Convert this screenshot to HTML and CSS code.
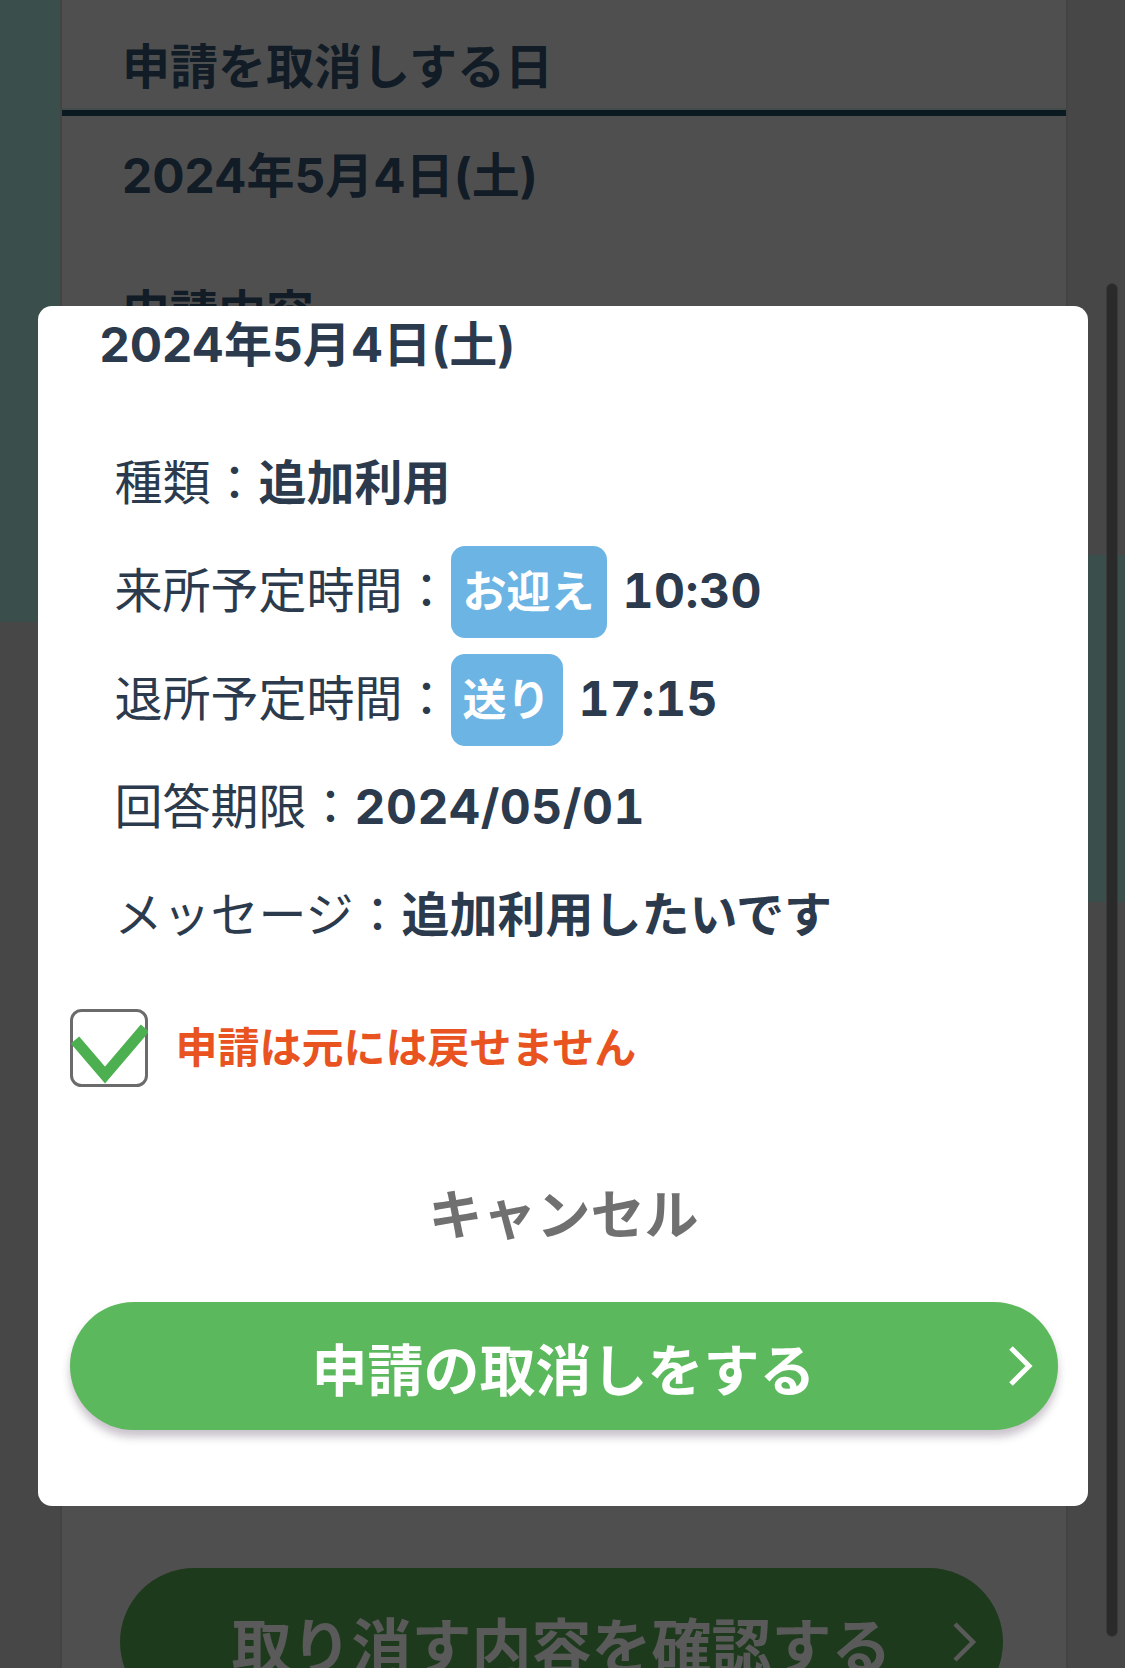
FILE: index.html
```html
<!DOCTYPE html>
<html lang="ja">
<head>
<meta charset="utf-8">
<title>申請の取消し</title>
<link rel="stylesheet" href="styles.css">
</head>
<body>
<main class="page">
  <section class="card">
    <h2 class="sec-title">申請を取消しする日</h2>
    <p class="sec-date">2024年5月4日(土)</p>
    <h2 class="sec-title">申請内容</h2>
    <button class="bg-btn" type="button">取り消す内容を確認する<svg class="bg-chev" viewBox="0 0 26 44" width="26" height="44"><polyline points="4,4 22,22 4,40" fill="none" stroke="currentColor" stroke-width="4.5"/></svg></button>
  </section>
</main>
<div class="scroll-indicator"></div>
<div class="overlay">
  <div class="modal">
    <p class="modal-date">2024年5月4日(土)</p>
    <div class="rows">
      <div class="row"><span class="label">種類：</span><span class="value">追加利用</span></div>
      <div class="row"><span class="label">来所予定時間：</span><span class="badge">お迎え</span><span class="value num time">10:30</span></div>
      <div class="row"><span class="label">退所予定時間：</span><span class="badge">送り</span><span class="value num time">17:15</span></div>
      <div class="row"><span class="label">回答期限：</span><span class="value num">2024/05/01</span></div>
      <div class="row"><span class="label">メッセージ：</span><span class="value">追加利用したいです</span></div>
    </div>
    <div class="confirm">
      <svg class="checkbox" viewBox="0 0 78 78" width="78" height="78">
        <rect x="1.5" y="1.5" width="75" height="75" rx="10" ry="10" fill="#fff" stroke="#6b6b6b" stroke-width="3"/>
        <polyline points="5,31 35,66 75,19" fill="none" stroke="#4cb050" stroke-width="11"/>
      </svg>
      <span class="warn">申請は元には戻せません</span>
    </div>
    <div class="cancel">キャンセル</div>
    <button class="primary" type="button">申請の取消しをする<svg class="chev" viewBox="0 0 26 44" width="26" height="44"><polyline points="4,4 22,22 4,40" fill="none" stroke="currentColor" stroke-width="5"/></svg></button>
  </div>
</div>
</body>
</html>
```
FILE: styles.css
```css
html, body {
  margin: 0;
  padding: 0;
}

body {
  width: 1125px;
  height: 1668px;
  overflow: hidden;
  font-family: "Inter", "Noto Sans CJK JP", sans-serif;
  color: #2b3a4c;
  background:
    linear-gradient(#91c6be, #91c6be) 0 0 / 60px 622px no-repeat,
    linear-gradient(#91c6be, #91c6be) 1068px 555px / 57px 347px no-repeat,
    #b2b2b2;
}

.page {
  display: flex;
  padding-left: 60px;
}

.card {
  box-sizing: border-box;
  width: 1008px;
  min-height: 1668px;
  background: #c6c6c6;
  border-left: 2px solid #a8a8a8;
  border-right: 2px solid #a8a8a8;
  display: flex;
  flex-direction: column;
}

.sec-title {
  margin: 0;
  padding: 34px 60px 10px;
  font-size: 48px;
  line-height: 66px;
  font-weight: 700;
  color: #2d465f;
  border-bottom: 6px solid #194150;
  box-shadow: 0 -4px 0 -2px rgba(120, 170, 165, 0.35) inset;
}

.sec-date {
  margin: 27px 0 37px;
  padding: 0 60px;
  font-size: 48px;
  line-height: 66px;
  font-weight: 700;
  color: #2d465f;
}

.bg-btn {
  position: relative;
  box-sizing: border-box;
  align-self: flex-start;
  margin: 1206px 0 0 58px;
  width: 883px;
  height: 148px;
  border: none;
  border-radius: 74px;
  background: #4b9146;
  color: #e1e1e1;
  font-family: inherit;
  font-size: 60px;
  font-weight: 700;
  padding: 0;
}

.bg-chev {
  position: absolute;
  right: 26px;
  top: 52px;
}

.scroll-indicator {
  position: fixed;
  left: 1107px;
  top: 284px;
  width: 10px;
  height: 1352px;
  border-radius: 5px;
  background: #2a2a2a;
  box-shadow: 0 0 0 1px #3a3a3a;
  z-index: 2;
}

.overlay {
  position: fixed;
  inset: 0;
  background: rgba(0, 0, 0, 0.6);
  display: flex;
  flex-direction: column;
  align-items: center;
  z-index: 1;
}

.modal {
  box-sizing: border-box;
  width: 1050px;
  margin-top: 306px;
  background: #fff;
  border-radius: 14px;
  padding: 9px 30px 76px 32px;
  display: flex;
  flex-direction: column;
}

.modal-date {
  margin: 0;
  padding-left: 30px;
  font-size: 48px;
  line-height: 60px;
  font-weight: 700;
  color: #2b3a4c;
}

.rows {
  display: flex;
  flex-direction: column;
  gap: 15px;
  margin-top: 62px;
  padding-left: 45px;
}

.row {
  display: flex;
  align-items: center;
  min-height: 93px;
  font-size: 48px;
  line-height: 1.3;
}

.label {
  font-weight: 400;
}

.value {
  font-weight: 700;
}

.num {
  font-variant-numeric: tabular-nums;
  letter-spacing: 0.5px;
}

.time {
  margin-left: 16px;
}

.badge {
  display: flex;
  align-items: center;
  box-sizing: border-box;
  height: 92px;
  padding: 0 12px;
  margin-left: 0;
  border-radius: 14px;
  background: #6cb4e4;
  color: #fff;
  font-size: 44px;
  font-weight: 700;
  line-height: 1;
}

.confirm {
  display: flex;
  align-items: center;
  gap: 28px;
  margin-top: 47px;
}

.checkbox {
  display: block;
  flex: none;
}

.warn {
  font-size: 42px;
  line-height: 1.3;
  font-weight: 700;
  color: #e8531f;
}

.cancel {
  margin-top: 89px;
  text-align: center;
  font-size: 54px;
  line-height: 80px;
  font-weight: 700;
  color: #707070;
}

.primary {
  position: relative;
  margin-top: 46px;
  height: 128px;
  border: none;
  border-radius: 64px;
  background: #5cb85c;
  color: #fff;
  font-family: inherit;
  font-size: 56px;
  font-weight: 700;
  padding: 0;
  box-shadow: 0 7px 8px rgba(60, 40, 70, 0.28);
}

.chev {
  position: absolute;
  right: 25px;
  top: 42px;
}
```
